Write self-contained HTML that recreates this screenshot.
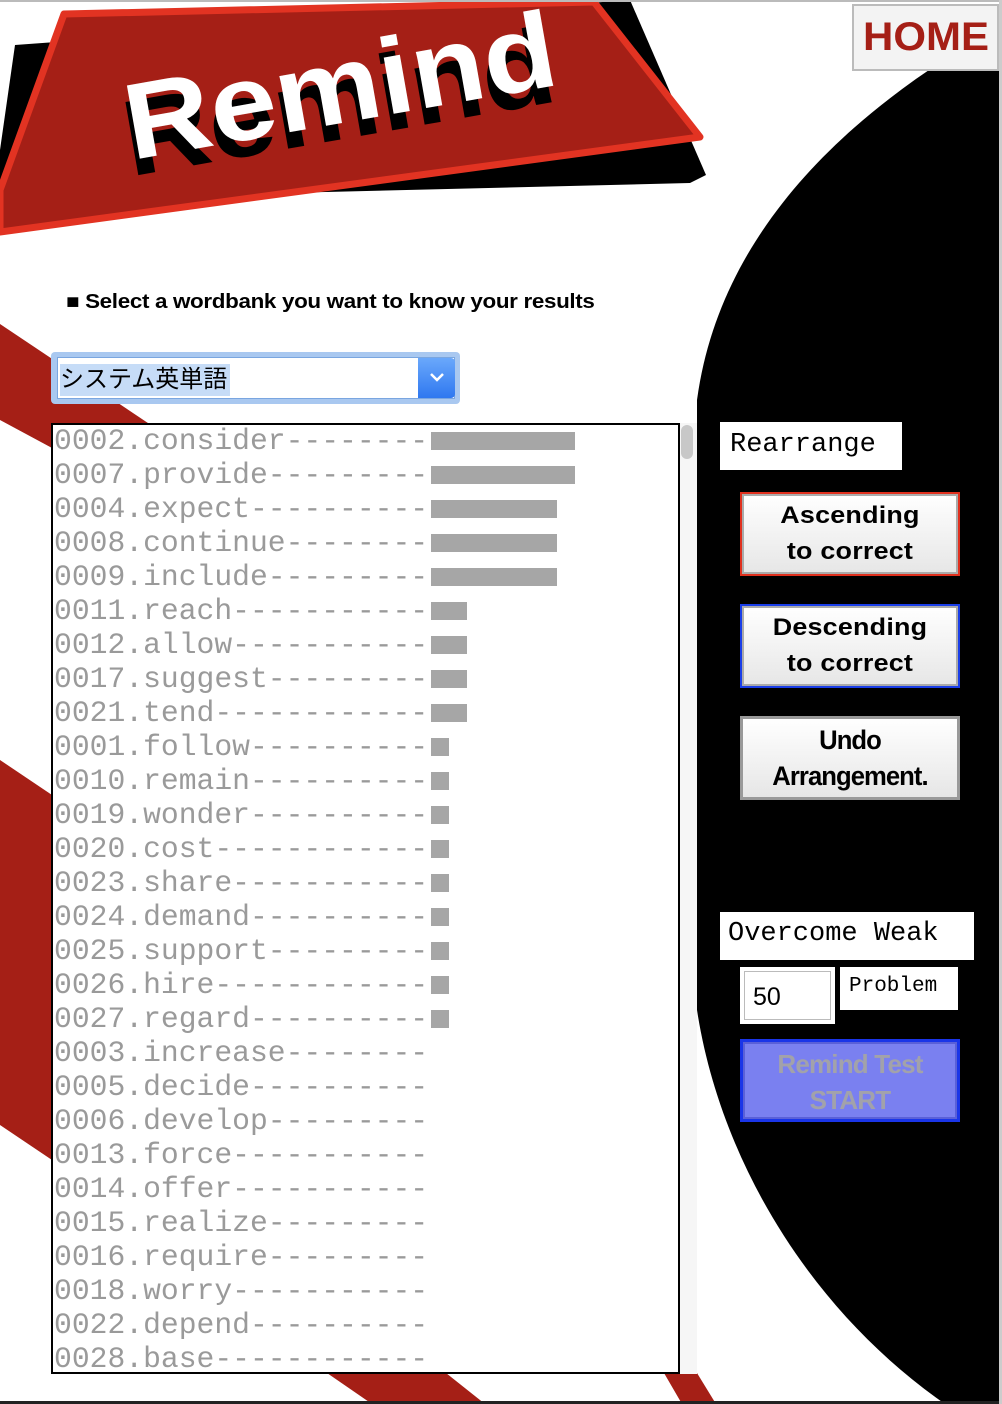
<!DOCTYPE html>
<html><head><meta charset="utf-8"><style>
*{margin:0;padding:0;box-sizing:border-box}
html,body{width:1002px;height:1404px;overflow:hidden;background:#fff;position:relative;font-family:"Liberation Sans",sans-serif}
.abs{position:absolute}
#list{left:51px;top:423px;width:629px;height:951px;border:2px solid #000;background:#fff;overflow:hidden}
.row{height:34px;line-height:32px;font-family:"Liberation Mono",monospace;font-size:29.7px;color:#9a9a9a;white-space:pre;position:relative;margin-left:1px}
.bar{position:absolute;top:7px;height:18px;background:#a6a6a6;left:377px}
.mono{font-family:"Liberation Mono",monospace;color:#000;background:#fff}
.btn{position:absolute;left:740px;width:220px;height:84px;border:2px solid;background:linear-gradient(#fff,#e6e6e6);box-shadow:inset 0 0 0 2px #aaa;text-align:center;font-weight:bold;color:#000;display:flex;flex-direction:column;justify-content:center}
.wide{font-size:24px;line-height:36px;transform:scaleX(1.12);letter-spacing:0.2px}
</style></head><body>
<svg class="abs" style="left:0;top:0" width="1002" height="1404">
<path d="M1002,25 C850,110 720,230 697,400 L697,1010 C720,1160 810,1310 945,1404 L1002,1404 Z" fill="#000"/>
<polygon points="0,324 260,498 260,560 0,420" fill="#a51f16"/>
<polygon points="0,760 260,935 260,1300 0,1125" fill="#a51f16"/>
<polygon points="327,1373 446,1373 485,1404 372,1404" fill="#a51f16"/>
<polygon points="664,1373 697,1373 716,1404 682,1404" fill="#a51f16"/>
<polygon points="15,45 630,0 706,175 690,183 0,200 0,150" fill="#000"/>
<polygon points="64,14 594,2 700,137 0,232 0,190" fill="#a51f16" stroke="#e23322" stroke-width="7" stroke-linejoin="round"/>
<g transform="translate(132,160) rotate(-10)" font-family="Liberation Sans" font-weight="bold" font-size="108">
<text x="-4" y="16" fill="#000" transform="scale(1.1,1)">Remind</text>
<text x="0" y="0" fill="#fff" transform="scale(1.1,1)">Remind</text>
</g>
<rect x="0" y="0" width="1002" height="2" fill="#bbb"/>
<rect x="0" y="1401" width="1002" height="3" fill="#222"/>
<rect x="999" y="0" width="3" height="1404" fill="#ccc"/>
</svg>
<div class="abs" style="left:852px;top:4px;width:147px;height:67px;background:#f3f3f3;border:2px solid #bbb;color:#a51f16;font-weight:bold;font-size:40px;line-height:62px;text-align:center;overflow:hidden"><span style="display:inline-block;transform:scaleX(1.05)">HOME</span></div>
<div class="abs" style="left:66px;top:291px;font-weight:bold;font-size:20px;color:#000;white-space:nowrap;transform-origin:0 0;transform:scaleX(1.12);letter-spacing:-0.3px">■ Select a wordbank you want to know your results</div>
<div class="abs" style="left:51px;top:352px;width:409px;height:52px;background:#a9c8f0;border-radius:4px"></div>
<div class="abs" style="left:57px;top:357px;width:398px;height:42px;background:#fff;border:1px solid #7aa6e0"></div>
<div class="abs" style="left:60px;top:364px;height:32px;width:170px;background:#c6dcf7;font-family:'Liberation Sans','Noto Sans CJK JP',sans-serif;font-size:24px;line-height:32px;color:#000;white-space:nowrap">システム英単語</div>
<div class="abs" style="left:418px;top:358px;width:37px;height:40px;background:linear-gradient(#6aa8fb,#2f78f0);border-radius:0 4px 4px 0;text-align:center">
<svg width="16" height="10" style="margin-top:14px"><path d="M2,2 L8,8 L14,2" stroke="#fff" stroke-width="2.5" fill="none"/></svg></div>
<div class="abs" style="left:680px;top:423px;width:17px;height:951px;background:#f6f6f6"></div>
<div class="abs" style="left:681px;top:425px;width:12px;height:34px;background:#c8c8c8;border-radius:6px"></div>
<div id="list" class="abs">
<div class="row">0002.consider--------<span class="bar" style="width:144px"></span></div>
<div class="row">0007.provide---------<span class="bar" style="width:144px"></span></div>
<div class="row">0004.expect----------<span class="bar" style="width:126px"></span></div>
<div class="row">0008.continue--------<span class="bar" style="width:126px"></span></div>
<div class="row">0009.include---------<span class="bar" style="width:126px"></span></div>
<div class="row">0011.reach-----------<span class="bar" style="width:36px"></span></div>
<div class="row">0012.allow-----------<span class="bar" style="width:36px"></span></div>
<div class="row">0017.suggest---------<span class="bar" style="width:36px"></span></div>
<div class="row">0021.tend------------<span class="bar" style="width:36px"></span></div>
<div class="row">0001.follow----------<span class="bar" style="width:18px"></span></div>
<div class="row">0010.remain----------<span class="bar" style="width:18px"></span></div>
<div class="row">0019.wonder----------<span class="bar" style="width:18px"></span></div>
<div class="row">0020.cost------------<span class="bar" style="width:18px"></span></div>
<div class="row">0023.share-----------<span class="bar" style="width:18px"></span></div>
<div class="row">0024.demand----------<span class="bar" style="width:18px"></span></div>
<div class="row">0025.support---------<span class="bar" style="width:18px"></span></div>
<div class="row">0026.hire------------<span class="bar" style="width:18px"></span></div>
<div class="row">0027.regard----------<span class="bar" style="width:18px"></span></div>
<div class="row">0003.increase--------</div>
<div class="row">0005.decide----------</div>
<div class="row">0006.develop---------</div>
<div class="row">0013.force-----------</div>
<div class="row">0014.offer-----------</div>
<div class="row">0015.realize---------</div>
<div class="row">0016.require---------</div>
<div class="row">0018.worry-----------</div>
<div class="row">0022.depend----------</div>
<div class="row">0028.base------------</div>
</div>
<div class="abs mono" style="left:720px;top:422px;width:182px;height:48px;font-size:27px;line-height:46px;padding-left:10px">Rearrange</div>
<div class="btn" style="top:492px;border-color:#e0301e"><div class="wide">Ascending<br>to correct</div></div>
<div class="btn" style="top:604px;border-color:#1a3ee8"><div class="wide">Descending<br>to correct</div></div>
<div class="btn" style="top:716px;border-color:#999;box-shadow:none;border-width:3px"><div style="font-size:27px;line-height:36px;letter-spacing:-1px;transform:scaleX(0.95)">Undo<br>Arrangement.</div></div>
<div class="abs mono" style="left:720px;top:912px;width:254px;height:48px;font-size:27px;line-height:44px;padding-left:8px;white-space:pre">Overcome Weak</div>
<div class="abs" style="left:740px;top:967px;width:95px;height:57px;background:#fff;padding:4px"><div style="border:1px solid #bbb;height:49px;font-size:25px;line-height:50px;padding-left:8px;color:#000">50</div></div>
<div class="abs mono" style="left:840px;top:967px;width:118px;height:43px;font-size:21px;line-height:40px;padding-left:9px">Problem</div>
<div class="abs" style="left:740px;top:1039px;width:220px;height:83px;background:#7a80f0;border:3px solid #1a35e8;box-shadow:inset 0 0 0 2px #5a60d8;text-align:center;font-weight:bold;color:#a2a2aa;font-size:26px;line-height:36px;padding-top:4px;letter-spacing:-0.8px">Remind Test<br>START</div>
</body></html>
